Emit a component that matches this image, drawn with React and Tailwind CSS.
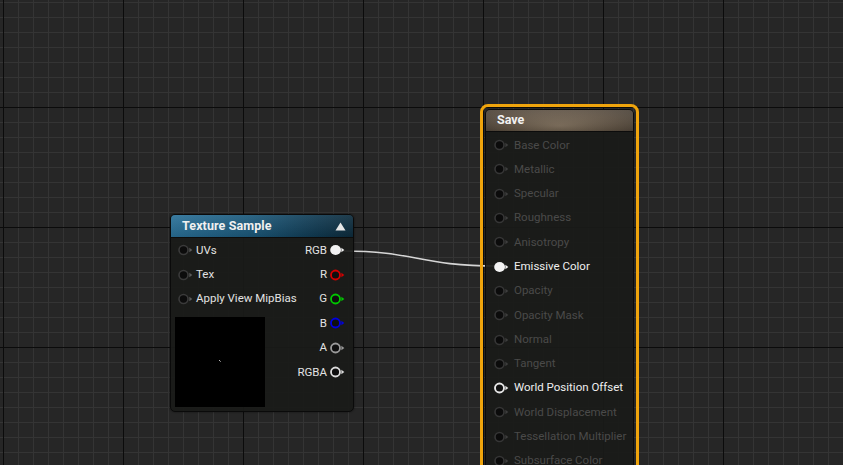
import React from "react";

const Pin = ({ color = "#3f3f3f", fill = "#0d0d0d", arrow = "#4a4a4a", filled = false, sw = 1.6 }) => (
  <svg width="15" height="12" viewBox="0 0 15 12" className="shrink-0">
    {filled ? (
      <ellipse cx="5.6" cy="6" rx="5.4" ry="5" fill={color} />
    ) : (
      <circle cx="5.5" cy="6" r="4.5" fill={fill} stroke={color} strokeWidth={sw} />
    )}
    <path d="M11.4 3.8 L14.3 6 L11.4 8.2 Z" fill={arrow} />
  </svg>
);

const saveRows = [
  ["Base Color", "off"],
  ["Metallic", "off"],
  ["Specular", "off"],
  ["Roughness", "off"],
  ["Anisotropy", "off"],
  ["Emissive Color", "filled"],
  ["Opacity", "off"],
  ["Opacity Mask", "off"],
  ["Normal", "off"],
  ["Tangent", "off"],
  ["World Position Offset", "ring"],
  ["World Displacement", "off"],
  ["Tessellation Multiplier", "off"],
  ["Subsurface Color", "off"],
];

const outRows = [
  { label: "RGB", filled: true, color: "#f2f2f2", arrow: "#f2f2f2" },
  { label: "R", color: "#d40000", arrow: "#d40000" },
  { label: "G", color: "#00c800", arrow: "#00c800" },
  { label: "B", color: "#0000e0", arrow: "#0000e0" },
  { label: "A", color: "#9a9a9a", arrow: "#9a9a9a" },
  { label: "RGBA", color: "#dcdcdc", arrow: "#dcdcdc" },
];

export default function App() {
  return (
    <div
      className="relative w-[843px] h-[465px] overflow-hidden bg-[#262626] bg-[linear-gradient(to_right,#0b0b0b_1px,transparent_1px),linear-gradient(to_bottom,#0b0b0b_1px,transparent_1px),linear-gradient(to_right,#343434_1px,transparent_1px),linear-gradient(to_bottom,#343434_1px,transparent_1px)] bg-[size:120px_120px,120px_120px,15px_15px,15px_15px] bg-[position:3px_0,0_107px,3px_2px,3px_2px]"
      style={{ fontFamily: "Roboto, 'Noto Sans', sans-serif" }}
    >
      {/* wire */}
      <svg className="absolute left-0 top-0" width="843" height="465">
        <path d="M343 251 C 415 251, 420 266, 497 266" fill="none" stroke="#d6d6d6" strokeWidth="1.6" />
      </svg>

      {/* Texture Sample node */}
      <div className="absolute left-[170px] top-[214px] w-[184px] h-[198px] rounded-[5px] border border-[#0a0a0a] bg-[#1a1b19]/[0.93] shadow-[0_0_2px_rgba(0,0,0,0.6)] flex flex-col overflow-hidden">
        <div className="h-[23px] shrink-0 flex items-center justify-between pl-[11px] pr-[7px] bg-[linear-gradient(to_bottom,rgba(255,255,255,0.08),rgba(0,0,0,0.12)),linear-gradient(to_right,#2a7199,#1b587a_45%,#103a52_80%,#0d2c3d)] border-b border-[#0c0c0c]">
          <span className="text-[12.5px] font-bold text-[#f0f0f0] tracking-[0.1px]">Texture Sample</span>
          <svg width="11" height="9" viewBox="0 0 11 9">
            <path d="M5.5 0.5 L10.5 8.5 L0.5 8.5 Z" fill="#e6e6e6" />
          </svg>
        </div>
        <div className="flex justify-between pt-[0px]">
          <div className="flex flex-col">
            {["UVs", "Tex", "Apply View MipBias"].map((t) => (
              <div key={t} className="h-[24.4px] flex items-center gap-[3px] pl-[7px]">
                <Pin color="#3a3a3a" fill="#0c0c0c" arrow="#5a5a5a" />
                <span className="text-[11.5px] text-[#e2e2e2]">{t}</span>
              </div>
            ))}
            <div className="ml-[4px] mt-[6px] w-[90px] h-[90px] bg-black relative">
              <div className="absolute left-[44px] top-[43px] w-[1px] h-[1px] bg-[#bbbbbb]" />
              <div className="absolute left-[45px] top-[44px] w-[1px] h-[1px] bg-[#777777]" />
            </div>
          </div>
          <div className="flex flex-col items-end">
            {outRows.map((r) => (
              <div key={r.label} className="h-[24.4px] flex items-center gap-[3px] pr-[8px]">
                <span className="text-[11.5px] text-[#e2e2e2]">{r.label}</span>
                <Pin color={r.color} fill="#0f0f0f" arrow={r.arrow} filled={r.filled} sw={1.8} />
              </div>
            ))}
          </div>
        </div>
      </div>

      {/* Save node (selected) */}
      <div className="absolute left-[480px] top-[104px] w-[159px] h-[400px] rounded-[8px] border-[3px] border-[#efa40c] p-[2px]">
        <div className="w-full h-full rounded-[5px] bg-[#1a1b19]/[0.93] border border-[#0a0a0a] overflow-hidden flex flex-col">
          <div className="h-[22px] shrink-0 flex items-center pl-[11px] bg-[linear-gradient(to_bottom,rgba(255,255,255,0.1),rgba(0,0,0,0.2)),radial-gradient(ellipse_at_50%_75%,#8a7964,#665848_55%,#463d33)] border-b border-[#0c0c0c]">
            <span className="text-[12.5px] font-bold text-[#f2f2f2]">Save</span>
          </div>
          <div className="flex flex-col pt-[1px]">
            {saveRows.map(([t, s]) => (
              <div key={t} className="h-[24.3px] flex items-center gap-[5px] pl-[8px]">
                {s === "filled" ? (
                  <Pin filled color="#f4f4f4" arrow="#f4f4f4" />
                ) : s === "ring" ? (
                  <Pin color="#e8e8e8" fill="#111111" arrow="#e8e8e8" sw={1.9} />
                ) : (
                  <Pin color="#363636" fill="#0b0b0b" arrow="#3e3e3e" />
                )}
                <span className={`text-[11.5px] ${s === "off" ? "text-[#4a4a49]" : "text-[#eeeeee]"}`}>{t}</span>
              </div>
            ))}
          </div>
        </div>
      </div>
    </div>
  );
}
